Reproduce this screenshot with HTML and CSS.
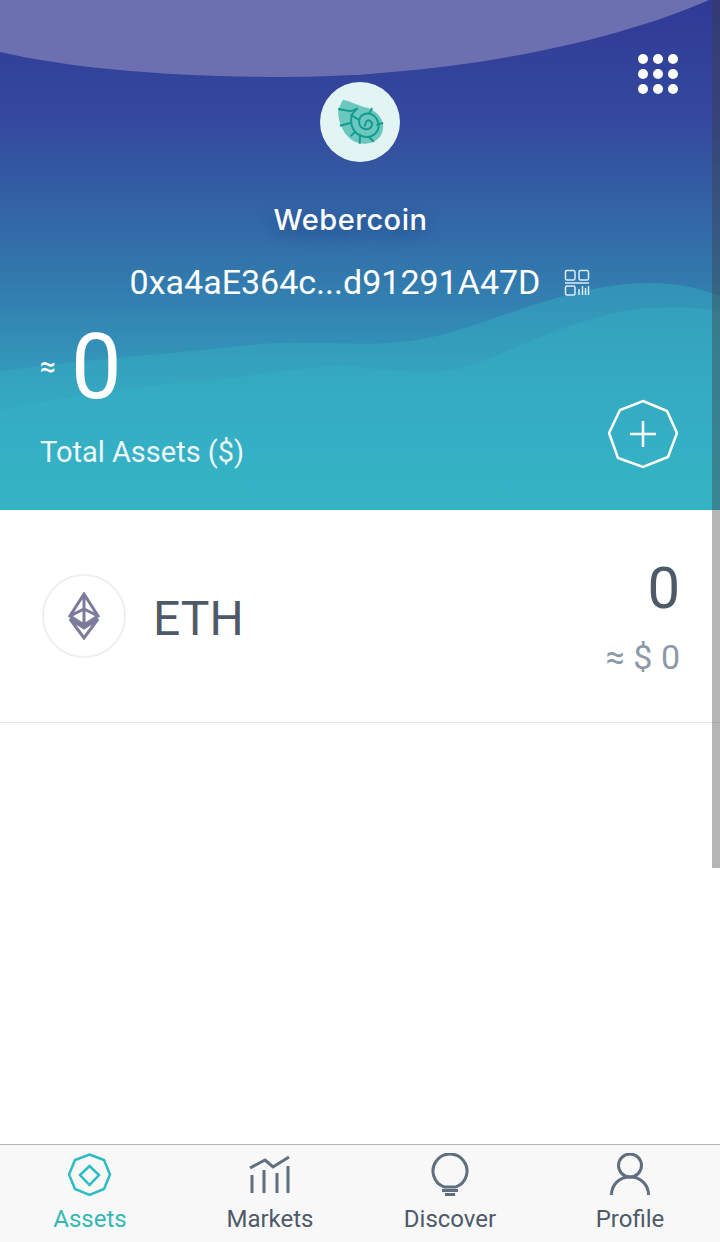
FILE: index.html
```html
<!DOCTYPE html>
<html lang="en">
<head>
    <meta charset="UTF-8">
    <meta name="viewport" content="width=device-width, initial-scale=1.0">
    <title>Webercoin Wallet</title>
    <link rel="stylesheet" href="styles.css">
</head>
<body>
    <div class="app">
        <header class="hero">
            <svg class="hero-art" viewBox="0 0 720 510" preserveAspectRatio="none">
                <path class="hero-arc" d="M0 0H709C600 48 430 78 270 77C160 76 70 68 0 52Z"/>
                <path class="hero-wave-back" d="M0 372C50 362 130 358 250 345C310 339 360 348 410 341C480 332 560 283 650 283C680 283 705 290 720 296V510H0Z"/>
                <path class="hero-wave-front" d="M0 410C70 396 150 384 230 378C280 372 320 364 360 367C400 370 440 378 480 362C530 342 590 312 650 308C680 306 705 308 720 312V510H0Z"/>
            </svg>

            <div class="menu-dots">
                <span></span><span></span><span></span>
                <span></span><span></span><span></span>
                <span></span><span></span><span></span>
            </div>

            <div class="avatar">
                <svg width="47" height="46" viewBox="110 88 140 138">
                    <path class="shell-body" d="M128 90C150 94 170 106 190 112C225 118 248 145 248 170C248 205 220 224 190 222C160 222 135 200 125 175C115 155 108 125 118 110C121 102 124 95 128 90Z"/>
                    <path class="shell-lines" d="M172 116C152 128 146 152 158 178C170 200 205 212 226 190C243 170 232 140 208 132C190 128 174 140 176 160C178 176 200 186 212 172C220 160 208 148 198 154M113 118L150 125L172 116M118 168L150 160M150 200L165 185M178 192V222M205 202L220 216M228 165L248 160M205 133L215 115M174 150L150 135M198 154L192 170"/>
                </svg>
            </div>

            <h1 class="wallet-name">Webercoin</h1>

            <div class="address-row">
                <span class="address">0xa4aE364c...d91291A47D</span>
                <svg class="qr-icon" width="26" height="27" viewBox="0 0 26 27">
                    <rect x="1.5" y="1.5" width="9.5" height="9.5" rx="1.5"/>
                    <rect x="15" y="1.5" width="9.5" height="9.5" rx="1.5"/>
                    <rect x="1.5" y="17" width="9.5" height="9" rx="1.5"/>
                    <path d="M1 14H25M15 20V26M18.500 17V26M21.500 19V26M24.500 17V26"/>
                </svg>
            </div>

            <div class="total">
                <div class="total-value"><span class="approx">≈</span><span class="amount">0</span></div>
                <div class="total-label">Total Assets ($)</div>
            </div>

            <button class="add-btn">
                <svg width="70" height="72" viewBox="0 0 70 72">
                    <path d="M35 3L59 13L69 35L60 59L35 69L10 60L1 35L12 12Z"/>
                    <path d="M22 36H48M35 23V49"/>
                </svg>
            </button>
        </header>

        <main class="assets">
            <div class="asset-row">
                <div class="coin-icon">
                    <svg width="32" height="48" viewBox="0 0 32 48">
                        <path d="M16 2L30 24L16 33L2 24ZM16 2V33M2 24L16 17L30 24M2 27L16 36L30 27L16 46Z"/>
                    </svg>
                </div>
                <div class="coin-name">ETH</div>
                <div class="coin-balance">
                    <div class="balance-amount">0</div>
                    <div class="balance-usd">≈ $ 0</div>
                </div>
            </div>
        </main>

        <nav class="tabbar">
            <a class="tab active">
                <svg width="44" height="44" viewBox="0 0 44 44">
                    <path d="M21.500 1.500L36 7L42 21.500L36 36L21.500 42L7 36L1 21.500L7 7Z"/>
                    <path d="M21.500 13L31 22L21.500 32L12 22Z"/>
                </svg>
                <span>Assets</span>
            </a>
            <a class="tab">
                <svg width="44" height="44" viewBox="0 0 44 44">
                    <path d="M2 15L17 7L25 14L41 4M4 22V40M16 17V40M29 20V40M40 13V40"/>
                </svg>
                <span>Markets</span>
            </a>
            <a class="tab">
                <svg width="44" height="44" viewBox="0 0 44 44">
                    <path d="M16 33.900A17 17 0 1 1 28 33.900Z"/>
                    <path d="M14 37.500H30M17 41.500H27"/>
                </svg>
                <span>Discover</span>
            </a>
            <a class="tab">
                <svg width="44" height="44" viewBox="0 0 44 44">
                    <circle cx="22" cy="12.500" r="11.500"/>
                    <path d="M3.500 42C3.500 31 12 24 22 24C32 24 40.500 31 40.500 42"/>
                </svg>
                <span>Profile</span>
            </a>
        </nav>

        <div class="scrollbar"></div>
    </div>
</body>
</html>
```

FILE: styles.css
```css
* {
    box-sizing: border-box;
}
body {
    margin: 0;
    font-family: Roboto, "Liberation Sans", sans-serif;
    background: #fff;
}
.app {
    position: relative;
    width: 720px;
    height: 1242px;
    display: flex;
    flex-direction: column;
    overflow: hidden;
}

/* top wallet card */
.hero {
    position: relative;
    height: 510px;
    flex-shrink: 0;
    padding-top: 82px;
    color: #fff;
    background: linear-gradient(180deg, #303a96 0%, #344a9e 25%, #326fa9 48%, #3282b1 60%, #34a2bf 78%, #36b8c8 100%);
}
.hero-art {
    position: absolute;
    left: 0;
    top: 0;
    width: 720px;
    height: 510px;
}
.hero-arc {
    fill: #6c70b0;
}
.hero-wave-back {
    fill: #36b0c4;
    opacity: 0.45;
}
.hero-wave-front {
    fill: #36b4c6;
    opacity: 0.35;
}
.menu-dots {
    position: absolute;
    top: 54px;
    left: 638px;
    display: grid;
    grid-template-columns: repeat(3, 10px);
    gap: 5px;
}
.menu-dots span {
    width: 10px;
    height: 10px;
    border-radius: 50%;
    background: #fff;
}
.avatar {
    position: relative;
    width: 80px;
    height: 80px;
    margin: 0 auto;
    border-radius: 50%;
    background: #e2f5f4;
    display: flex;
    align-items: center;
    justify-content: center;
}
.shell-body {
    fill: #6cc7be;
}
.shell-lines {
    fill: none;
    stroke: #139d90;
    stroke-width: 6;
}
.wallet-name {
    position: relative;
    margin: 38px 0 0;
    padding-right: 19px;
    text-align: center;
    font-family: Inter, sans-serif;
    font-size: 29px;
    line-height: 40px;
    font-weight: 500;
    letter-spacing: 0.5px;
    text-shadow: 0 6px 14px rgba(20, 40, 110, 0.4);
}
.address-row {
    position: relative;
    margin-top: 22px;
    display: flex;
    justify-content: center;
    align-items: center;
    gap: 24px;
    height: 40px;
}
.address {
    font-size: 34px;
}
.qr-icon {
    fill: none;
    stroke: #dcebf4;
    stroke-width: 1.5;
}
.total {
    position: relative;
    margin: 26px 0 0 40px;
}
.total-value {
    display: flex;
    align-items: center;
    gap: 15px;
    height: 80px;
}
.approx {
    font-size: 28px;
    font-weight: 500;
    margin-bottom: 4px;
}
.amount {
    font-size: 90px;
    line-height: 80px;
}
.total-label {
    margin-top: 26px;
    font-size: 29px;
    line-height: 36px;
    color: #ebf8fa;
}
.add-btn {
    position: absolute;
    top: 398px;
    left: 608px;
    width: 70px;
    height: 72px;
    padding: 0;
    border: none;
    background: none;
}
.add-btn svg {
    display: block;
    fill: none;
    stroke: #fff;
    stroke-width: 2.5;
}

/* asset list */
.assets {
    flex: 1;
    background: #fff;
}
.asset-row {
    height: 213px;
    padding: 0 40px 0 42px;
    display: flex;
    align-items: center;
    border-bottom: 1px solid #e8e8ea;
}
.coin-icon {
    width: 84px;
    height: 84px;
    border: 2px solid #f0f0f2;
    border-radius: 50%;
    display: flex;
    align-items: center;
    justify-content: center;
}
.coin-icon svg {
    fill: none;
    stroke: #7b7b9c;
    stroke-width: 3;
}
.coin-name {
    margin: 4px 0 0 27px;
    font-size: 48px;
    color: #4e5a68;
}
.coin-balance {
    margin-left: auto;
    text-align: right;
}
.balance-amount {
    font-size: 58px;
    line-height: 64px;
    color: #4e5a68;
}
.balance-usd {
    margin-top: 17px;
    font-size: 34px;
    line-height: 40px;
    color: #8e99a8;
}

/* bottom tabs */
.tabbar {
    height: 98px;
    flex-shrink: 0;
    display: grid;
    grid-template-columns: repeat(4, 180px);
    background: #f8f8f9;
    border-top: 1px solid #b4b4b6;
}
.tab {
    display: flex;
    flex-direction: column;
    align-items: center;
    padding-top: 8px;
    font-size: 24px;
    line-height: 32px;
    color: #4e5a68;
}
.tab svg {
    fill: none;
    stroke: #5f6f7f;
    stroke-width: 3;
}
.tab span {
    margin-top: 6px;
}
.tab.active {
    color: #35b8b4;
}
.tab.active svg {
    stroke: #2cbcc4;
    stroke-width: 2.5;
}

.scrollbar {
    position: absolute;
    top: 0;
    right: 0;
    width: 8px;
    height: 868px;
    background: rgba(60, 60, 60, 0.38);
}
```
